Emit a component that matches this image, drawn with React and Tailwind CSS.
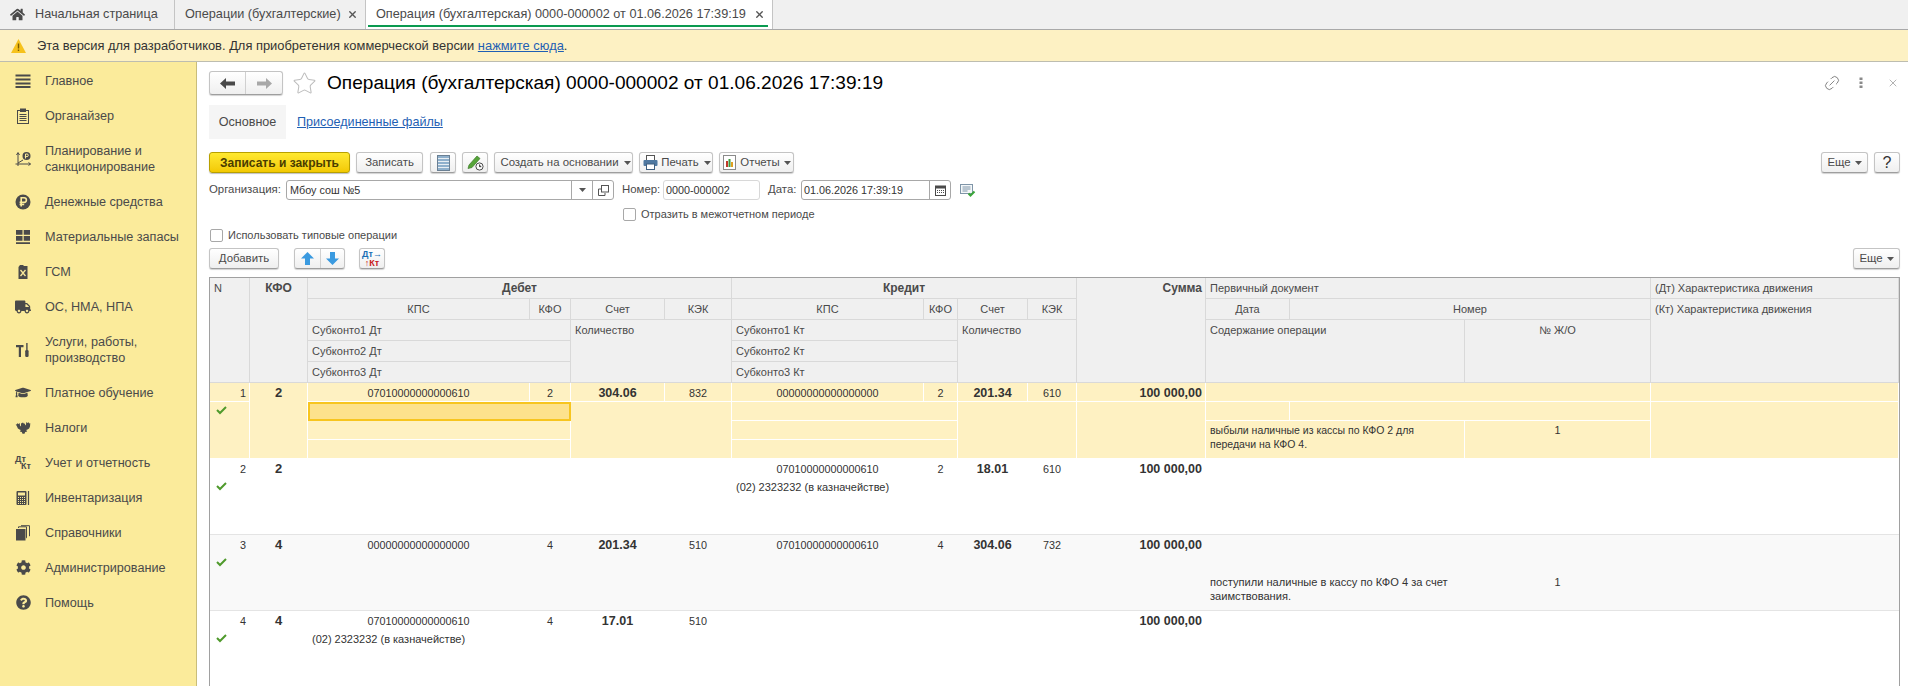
import React from 'react';
import { FaHome, FaTruck, FaCog, FaQuestionCircle, FaGraduationCap } from 'react-icons/fa';
import { Link2, Star, X } from 'lucide-react';

const GRID = 'grid grid-cols-[40px_58px_222px_41px_94px_67px_192px_34px_70px_49px_129px_84px_175px_186px_248px]';

const I = ({ children, s = 16 }) => (
  <svg width={s} height={s} viewBox="0 0 16 16" fill="none">{children}</svg>
);
const D = '#4a4a4a';

const Caret = ({ c = '#555' }) => (
  <svg width="7" height="4" viewBox="0 0 7 4" className="shrink-0"><path d="M0 0h7L3.5 4z" fill={c} /></svg>
);

const Check = () => (
  <svg width="11" height="9" viewBox="0 0 11 9" fill="none"><path d="M1 4l3 3 6-6" stroke="#4f9a2c" strokeWidth="2" /></svg>
);

const sideItems = [
  ['Главное', <I key="a"><path d="M0.5 1.5h15v2h-15zM0.5 5.5h15v2h-15zM0.5 9.5h15v2h-15zM0.5 13h15v2h-15z" fill={D} /></I>],
  ['Органайзер', <I key="b"><rect x="2.5" y="2.5" width="11" height="13" stroke={D} /><rect x="5" y="0.5" width="6" height="3.5" fill={D} /><path d="M4.5 6.5h7M4.5 8.5h7M4.5 10.5h7M4.5 12.5h7" stroke={D} /></I>],
  [<>Планирование и<br />санкционирование</>, <I key="c"><path d="M3 15V2M1.5 4L3 1.5 4.5 4M0.5 13h15M13.5 11.5l2 1.5-2 1.5M3 12l5-3" stroke={D} /><circle cx="11.5" cy="5" r="4" fill={D} /><path d="M10.5 7.5V3h1.5a1.3 1.3 0 0 1 0 2.6h-2.2" stroke="#fbeb9b" /></I>, true],
  ['Денежные средства', <I key="d"><circle cx="8" cy="8" r="7.5" fill={D} /><path d="M6.2 12.5V3.8h2.9a2.3 2.3 0 0 1 0 4.6H4.6M4.6 10.5h4.6" stroke="#fbeb9b" strokeWidth="1.6" /></I>],
  ['Материальные запасы', <I key="e"><path d="M1 1h6.5v4.8H1zM8.7 1h6.3v4.8H8.7zM1 7h6.5v4.8H1zM8.7 7h6.3v4.8H8.7zM1 13.2h14v1.8H1z" fill={D} /></I>],
  ['ГСМ', <I key="f"><path d="M5 1h3l1 1h3.5v13h-9V3z" fill={D} /><path d="M5.5 6l5 6M10.5 6l-5 6" stroke="#fbeb9b" strokeWidth="1.3" /></I>],
  ['ОС, НМА, НПА', <FaTruck key="g" size={16} color={D} />],
  [<>Услуги, работы,<br />производство</>, <I key="h"><path d="M1 3h7.5v2.2H6V15H3.8V5.2H1z" fill={D} /><path d="M11.2 1h1.4v7h-1.4z" fill={D} /><rect x="10.2" y="8" width="3.4" height="7" rx="1.2" fill={D} /></I>, true],
  ['Платное обучение', <FaGraduationCap key="i" size={17} color={D} />],
  ['Налоги', <I key="j"><path d="M8 2.5l1 1.3 1-.3v2l1-1 .3-2.5 1.2 1 1.2-.8.7 1.3.9-.3-.3 3.2-.9 2.2-1.6.9-1.3.4 1 1.5-2 .5-.7 1.8H7.5l-.7-1.8-2-.5 1-1.5-1.3-.4-1.6-.9-.9-2.2L.7 4.2l.9.3.7-1.3 1.2.8 1.2-1L5 5.5l1 1v-3z" fill={D} /></I>],
  ['Учет и отчетность', <span key="k" className="relative block w-[16px] h-[15px] font-bold text-[9px] leading-[8px] text-[#4a4a4a]"><span className="absolute left-0 top-0">Дт</span><span className="absolute right-0 bottom-0">Кт</span></span>],
  ['Инвентаризация', <I key="l"><rect x="1.5" y="1" width="10" height="14" rx="1" fill={D} /><rect x="3" y="2.5" width="7" height="3" fill="#fbeb9b" /><path d="M3 7.5h7M3 9.5h7M3 11.5h7M3 13.5h7" stroke="#fbeb9b" strokeDasharray="1 1" /><path d="M13.5 1v14" stroke={D} strokeWidth="1.2" /></I>],
  ['Справочники', <I key="m"><rect x="1" y="4" width="9.5" height="11.5" fill={D} /><path d="M3.5 3V1.8h8v11h-0.5M6 0.7h8.5v10.5" stroke={D} strokeWidth="1" /></I>],
  ['Администрирование', <FaCog key="n" size={15} color={D} />],
  ['Помощь', <FaQuestionCircle key="o" size={15} color={D} />],
];

function Sidebar() {
  return (
    <div className="w-[197px] shrink-0 bg-[#fbeb9b] border-r border-[#c9bd7a] pt-px">
      {sideItems.map(([t, icon, two], i) => (
        <div key={i} className={`flex items-center ${two ? 'h-[51px]' : 'h-[35px]'}`}>
          <div className="w-[46px] pl-[15px] pr-[15px] flex justify-center shrink-0 items-center">
            <div className="w-[16px] shrink-0 flex justify-center">{icon}</div>
          </div>
          <div className="text-[12.65px] leading-[16px] text-[#4a4a4a] -ml-px">{t}</div>
        </div>
      ))}
    </div>
  );
}

const BTN = 'flex items-center justify-center h-[21px] rounded-[3px] border border-[#c4c4c4] border-b-[#9e9e9e] bg-linear-to-b from-white to-[#efefef] shadow-[0_1px_1px_rgba(0,0,0,0.18)] text-[11.4px] text-[#4a4a4a] shrink-0 whitespace-nowrap';

function TabBar() {
  return (
    <div className="h-[30px] bg-[#f0f0f0] border-b border-[#a9a9a9] flex text-[12.7px] text-[#4a4a4a] shrink-0 whitespace-nowrap">
      <div className="w-[175px] border-r border-[#c4c4c4] flex items-center pl-[10px]">
        <FaHome size={15} color="#4a4a4a" />
        <span className="ml-[10px]">Начальная страница</span>
      </div>
      <div className="w-[191px] border-r border-[#c4c4c4] flex items-center pl-[10px]">
        <span>Операции (бухгалтерские)</span>
        <X size={11} strokeWidth={3} className="ml-[6px] text-[#555]" />
      </div>
      <div className="w-[407px] bg-white border-r border-[#c4c4c4] flex items-center pl-[10px] relative">
        <span>Операция (бухгалтерская) 0000-000002 от 01.06.2026 17:39:19</span>
        <X size={11} strokeWidth={3} className="ml-[8px] text-[#555]" />
        <div className="absolute left-[2px] right-[4px] top-[25px] h-[2px] bg-[#0a9a50]" />
      </div>
    </div>
  );
}

function Notice() {
  return (
    <div className="h-[32px] bg-[#fdf1c3] border-b border-[#bdbdb0] flex items-center pl-[11px] text-[12.9px] text-[#333] shrink-0">
      <svg width="15" height="14" viewBox="0 0 15 14"><path d="M7.5 0L15 14H0z" fill="#f6c21c" /><path d="M7.5 4.5v5M7.5 10.5v1.6" stroke="#7a5c00" strokeWidth="1.4" /></svg>
      <span className="ml-[11px]">Эта версия для разработчиков. Для приобретения коммерческой версии <span className="text-[#1f5fb4] underline">нажмите сюда</span>.</span>
    </div>
  );
}

function NavBar() {
  return (
    <div className="flex items-center h-[24px] mt-[9px]">
      <div className={`${BTN} !h-[24px] w-[74px]`}>
        <div className="w-[36px] flex justify-center border-r border-[#d0d0d0] h-full items-center">
          <svg width="15" height="11" viewBox="0 0 15 11"><path d="M0 5.5L6 0v3.5h9v4H6V11z" fill="#4a4a4a" /></svg>
        </div>
        <div className="flex-1 flex justify-center">
          <svg width="15" height="11" viewBox="0 0 15 11"><path d="M15 5.5L9 0v3.5H0v4h9V11z" fill="#a8a8a8" /></svg>
        </div>
      </div>
      <Star size={25} strokeWidth={1} className="ml-[9px] text-[#bdbdbd]" />
      <div className="ml-[10px] text-[19.08px] text-black whitespace-nowrap">Операция (бухгалтерская) 0000-000002 от 01.06.2026 17:39:19</div>
      <div className="ml-auto flex items-center text-[#666]">
        <Link2 size={18} strokeWidth={1} className="-rotate-45" />
        <svg width="4" height="12" viewBox="0 0 4 12" className="ml-[18px]"><path d="M0.5 0.5h3v2.4h-3zM0.5 4.5h3v2.4h-3zM0.5 8.6h3V11h-3z" fill="#8a8a8a" /></svg>
        <X size={12} strokeWidth={1} className="ml-[24px] mr-px" />
      </div>
    </div>
  );
}

function FormTabs() {
  return (
    <div className="flex h-[34px] mt-[10px] items-center text-[12.6px]">
      <div className="w-[77px] h-full bg-[#f5f5f5] flex items-center justify-center text-[#4a4a4a]">Основное</div>
      <div className="ml-[11px] text-[#1f5fb4] underline">Присоединенные файлы</div>
    </div>
  );
}

function Toolbar() {
  return (
    <div className="flex h-[21px] mt-[13px] gap-[6px] items-center">
      <div className="flex items-center justify-center h-[21px] w-[141px] rounded-[3px] border border-[#b8a000] bg-linear-to-b from-[#ffe92f] to-[#f3c900] shadow-[0_1px_1px_rgba(0,0,0,0.25)] text-[12px] font-bold text-[#4a3c00]">Записать и закрыть</div>
      <div className={`${BTN} w-[67px]`}>Записать</div>
      <div className={`${BTN} w-[26px] ml-px`}>
        <svg width="13" height="16" viewBox="0 0 13 16"><rect x="0.5" y="0.5" width="12" height="15" fill="#8fb0cc" stroke="#6a7f93" /><path d="M1 3.5h11M1 6.5h11M1 9.5h11M1 12.5h11" stroke="#e8eef3" /></svg>
      </div>
      <div className={`${BTN} w-[26px]`}>
        <svg width="17" height="17" viewBox="0 0 17 17"><path d="M2 11l8-9 3 2.5-8 9-4 1z" fill="#57a53a" stroke="#3c7a28" strokeWidth="0.7" /><circle cx="12.5" cy="12.5" r="3.6" fill="#fff" stroke="#4a4a4a" /><path d="M12.5 10.5v2.2h1.8" stroke="#4a4a4a" /></svg>
      </div>
      <div className={`${BTN} w-[139px] gap-[5px] pl-[4px]`}>Создать на основании <Caret /></div>
      <div className={`${BTN} w-[74px] gap-[3px] pl-[2px]`}>
        <svg width="15" height="15" viewBox="0 0 15 15"><rect x="3.5" y="0.5" width="8" height="5" fill="#fff" stroke="#555" /><rect x="0.5" y="5" width="14" height="6" rx="1" fill="#4f78a0" /><rect x="3.5" y="9" width="8" height="5.5" fill="#fff" stroke="#3e5f80" /></svg>
        Печать <span className="ml-[2px] flex"><Caret /></span>
      </div>
      <div className={`${BTN} w-[75px] gap-[4px] pl-[1px]`}>
        <svg width="13" height="15" viewBox="0 0 13 15"><rect x="0.5" y="0.5" width="12" height="14" fill="#fff" stroke="#8a8a8a" /><rect x="3" y="6" width="2" height="6" fill="#c0392b" /><rect x="5.5" y="4" width="2" height="8" fill="#3c9a3c" /><rect x="8" y="7" width="2" height="5" fill="#e0a020" /></svg>
        Отчеты <Caret />
      </div>
      <div className={`${BTN} w-[47px] gap-[4px] ml-auto`}>Еще <Caret /></div>
      <div className={`${BTN} w-[26px] !text-[16px] !text-[#333]`}>?</div>
    </div>
  );
}

function FormRow() {
  return (
    <div className="flex h-[20px] mt-[7px] items-center text-[11.4px] text-[#4a4a4a]">
      <div className="w-[77px] whitespace-nowrap">Организация:</div>
      <div className="w-[328px] h-full border border-[#a8a8a8] rounded-[3px] flex items-center">
        <div className="flex-1 pl-[3px] text-[#333] text-[10.8px]">Мбоу сош №5</div>
        <div className="w-[21px] h-full border-l border-[#a8a8a8] flex items-center justify-center"><Caret /></div>
        <div className="w-[21px] h-full border-l border-[#a8a8a8] flex items-center justify-center">
          <svg width="11" height="11" viewBox="0 0 11 11" fill="none"><rect x="3.5" y="0.5" width="7" height="6.5" stroke="#555" /><path d="M3 4H0.5v6.5H7V8" stroke="#555" /></svg>
        </div>
      </div>
      <div className="ml-[8px] w-[41px]">Номер:</div>
      <div className="w-[97px] h-full border border-[#d8d8d8] rounded-[3px] flex items-center pl-[2px] text-[#333] text-[10.8px]">0000-000002</div>
      <div className="ml-[8px] w-[33px]">Дата:</div>
      <div className="w-[150px] h-full border border-[#a8a8a8] rounded-[3px] flex items-center">
        <div className="flex-1 pl-[2px] text-[#333] text-[10.8px]">01.06.2026 17:39:19</div>
        <div className="w-[21px] h-full border-l border-[#a8a8a8] flex items-center justify-center">
          <svg width="11" height="11" viewBox="0 0 11 11"><rect x="0.5" y="1" width="10" height="9.5" fill="#fff" stroke="#4a4a4a" /><rect x="0.5" y="1" width="10" height="2.5" fill="#4a4a4a" /><path d="M2 5.5h7M2 7.5h7" stroke="#4a4a4a" strokeDasharray="1 1" /></svg>
        </div>
      </div>
      <svg width="16" height="13" viewBox="0 0 16 13" className="ml-[9px]" fill="none"><rect x="0.5" y="0.5" width="12" height="9" stroke="#7f95a8" fill="#f4f7f9" /><path d="M2.5 3h8M2.5 5h8M2.5 7h5" stroke="#7f95a8" /><path d="M8.5 9.5l2 2 4-4" stroke="#3aa53a" strokeWidth="2" /></svg>
    </div>
  );
}

const Box = () => <div className="w-[13px] h-[13px] border border-[#a8a8a8] rounded-[2px] bg-white shrink-0" />;

function Checks() {
  return (
    <>
      <div className="flex h-[14px] mt-[7px] items-center pl-[414px] text-[11px] text-[#4a4a4a]">
        <Box /><span className="ml-[5px]">Отразить в межотчетном периоде</span>
      </div>
      <div className="flex h-[14px] mt-[7px] items-center pl-[1px] text-[11px] text-[#4a4a4a]">
        <Box /><span className="ml-[5px]">Использовать типовые операции</span>
      </div>
    </>
  );
}

function TableBar() {
  return (
    <div className="flex h-[21px] mt-[6px] items-center">
      <div className={`${BTN} w-[70px]`}>Добавить</div>
      <div className={`${BTN} w-[51px] ml-[15px]`}>
        <div className="w-[26px] h-full border-r border-[#d0d0d0] flex items-center justify-center">
          <svg width="13" height="13" viewBox="0 0 13 13"><path d="M6.5 0L13 6.5H9V13H4V6.5H0z" fill="#3a9ae0" /></svg>
        </div>
        <div className="flex-1 flex items-center justify-center">
          <svg width="13" height="13" viewBox="0 0 13 13"><path d="M6.5 13L13 6.5H9V0H4v6.5H0z" fill="#3a9ae0" /></svg>
        </div>
      </div>
      <div className={`${BTN} w-[26px] ml-[14px] !flex-col !items-center font-bold`}>
        <span className="text-[9px] leading-[9px] text-[#1a6fb5]">Дт→</span>
        <span className="text-[9px] leading-[9px] text-[#c8201a]">↑Кт</span>
      </div>
      <div className={`${BTN} w-[47px] gap-[4px] ml-auto`}>Еще <Caret /></div>
    </div>
  );
}

const H = ({ c = '', children }) => (
  <div className={`bg-[#f0f0f0] border-r border-b border-[#d9d9d9] text-[11px] leading-[20px] text-[#4a4a4a] px-[4px] whitespace-nowrap overflow-hidden ${c}`}>{children}</div>
);

function Header() {
  return (
    <div className={`${GRID} grid-rows-[repeat(5,21px)] border-b border-[#c4c4c4] h-[105px]`}>
      <H c="row-span-5">N</H>
      <H c="row-span-5 text-center font-bold !text-[12px]">КФО</H>
      <H c="col-span-4 text-center font-bold !text-[12px]">Дебет</H>
      <H c="col-span-4 text-center font-bold !text-[12px]">Кредит</H>
      <H c="row-span-5 text-right font-bold !text-[12px] !pr-[3px]">Сумма</H>
      <H c="col-span-3">Первичный документ</H>
      <H>(Дт) Характеристика движения</H>

      <H c="text-center">КПС</H>
      <H c="text-center">КФО</H>
      <H c="text-center">Счет</H>
      <H c="text-center">КЭК</H>
      <H c="text-center">КПС</H>
      <H c="text-center">КФО</H>
      <H c="text-center">Счет</H>
      <H c="text-center">КЭК</H>
      <H c="text-center">Дата</H>
      <H c="col-span-2 text-center">Номер</H>
      <H c="row-span-4">(Кт) Характеристика движения</H>

      <H c="col-span-2">Субконто1 Дт</H>
      <H c="col-span-2 row-span-3">Количество</H>
      <H c="col-span-2">Субконто1 Кт</H>
      <H c="col-span-2 row-span-3">Количество</H>
      <H c="col-span-2 row-span-3">Содержание операции</H>
      <H c="row-span-3 text-center">№ Ж/О</H>

      <H c="col-span-2">Субконто2 Дт</H>
      <H c="col-span-2">Субконто2 Кт</H>
      <H c="col-span-2">Субконто3 Дт</H>
      <H c="col-span-2">Субконто3 Кт</H>
    </div>
  );
}

const rows = [
  { n: 1, k: 2, d: ['07010000000000610', 2, '304.06', 832], sd: '', c: ['00000000000000000', 2, '201.34', 610], sc: '', text: <>выбыли наличные из кассы по КФО 2 для<br />передачи на КФО 4.</>, ts: '!text-[10.5px]', jo: 1, active: true },
  { n: 2, k: 2, d: ['', '', '', ''], sd: '', c: ['07010000000000610', 2, '18.01', 610], sc: '(02) 2323232 (в казначействе)' },
  { n: 3, k: 4, d: ['00000000000000000', 4, '201.34', 510], sd: '', c: ['07010000000000610', 4, '304.06', 732], sc: '', text: <>поступили наличные в кассу по КФО 4 за счет<br />заимствования.</>, ts: '!text-[11.1px]', jo: 1, alt: true },
  { n: 4, k: 4, d: ['07010000000000610', 4, '17.01', 510], sd: '(02) 2323232 (в казначействе)', c: ['', '', '', ''], sc: '' },
];

function Row({ r }) {
  const bg = r.active ? 'bg-[#fef1c2]' : r.alt ? 'bg-[#f9f9f9]' : 'bg-white';
  const line = r.active ? 'border-white' : 'border-transparent';
  const base = `border-r border-b ${line} text-[10.8px] leading-[20px] text-[#333] whitespace-nowrap overflow-hidden`;
  const C = ({ c = '', children }) => <div className={`${base} ${c}`}>{children}</div>;
  return (
    <div className={`${GRID} grid-rows-[repeat(4,19px)] h-[76px] border-b border-[#e4e4e4] ${bg}`}>
      <C c="text-right pr-[3px]">{r.n}</C>
      <C c="row-span-4 text-center font-bold !text-[13px]">{r.k}</C>
      <C c="text-center">{r.d[0]}</C>
      <C c="text-center">{r.d[1]}</C>
      <C c="text-center font-bold !text-[12.5px]">{r.d[2]}</C>
      <C c="text-center">{r.d[3]}</C>
      <C c="text-center">{r.c[0]}</C>
      <C c="text-center">{r.c[1]}</C>
      <C c="text-center font-bold !text-[12.5px]">{r.c[2]}</C>
      <C c="text-center">{r.c[3]}</C>
      <C c="text-right pr-[3px] font-bold !text-[12.5px]">100 000,00</C>
      <C c="col-span-3" />
      <C />

      <C c="row-span-3 pl-[6px] pt-[4px] !leading-[10px]"><Check /></C>
      <C c={`col-span-2 pl-[4px] !text-[11px] !leading-[18px] ${r.active ? '!bg-[#fde28c] !border-2 !border-[#f7c51f]' : ''}`}>{r.sd}</C>
      <C c="col-span-2 row-span-3" />
      <C c="col-span-2 pl-[4px] !text-[11px] !leading-[18px]">{r.sc}</C>
      <C c="col-span-2 row-span-3" />
      <C c="row-span-3" />
      <C />
      <C c="col-span-2" />
      <C c="row-span-3" />

      <C c="col-span-2" />
      <C c="col-span-2" />
      <C c={`col-span-2 row-span-2 pl-[4px] pt-[2px] !leading-[14px] ${r.ts || ''}`}>{r.text}</C>
      <C c="row-span-2 text-center !leading-[18px]">{r.jo}</C>

      <C c="col-span-2" />
      <C c="col-span-2" />
    </div>
  );
}

export default function App() {
  return (
    <div className="w-[1908px] h-[686px] overflow-hidden flex flex-col bg-white font-['Liberation_Sans',Arial,sans-serif]">
      <TabBar />
      <Notice />
      <div className="flex flex-1 min-h-0">
        <Sidebar />
        <div className="flex-1 min-w-0 pl-[12px] pr-[8px] flex flex-col">
          <NavBar />
          <FormTabs />
          <Toolbar />
          <FormRow />
          <Checks />
          <TableBar />
          <div className="mt-[8px] border-t border-x border-[#a0a0a0] flex-1 min-h-0 overflow-hidden">
            <Header />
            {rows.map((r) => <Row key={r.n} r={r} />)}
          </div>
        </div>
      </div>
    </div>
  );
}
